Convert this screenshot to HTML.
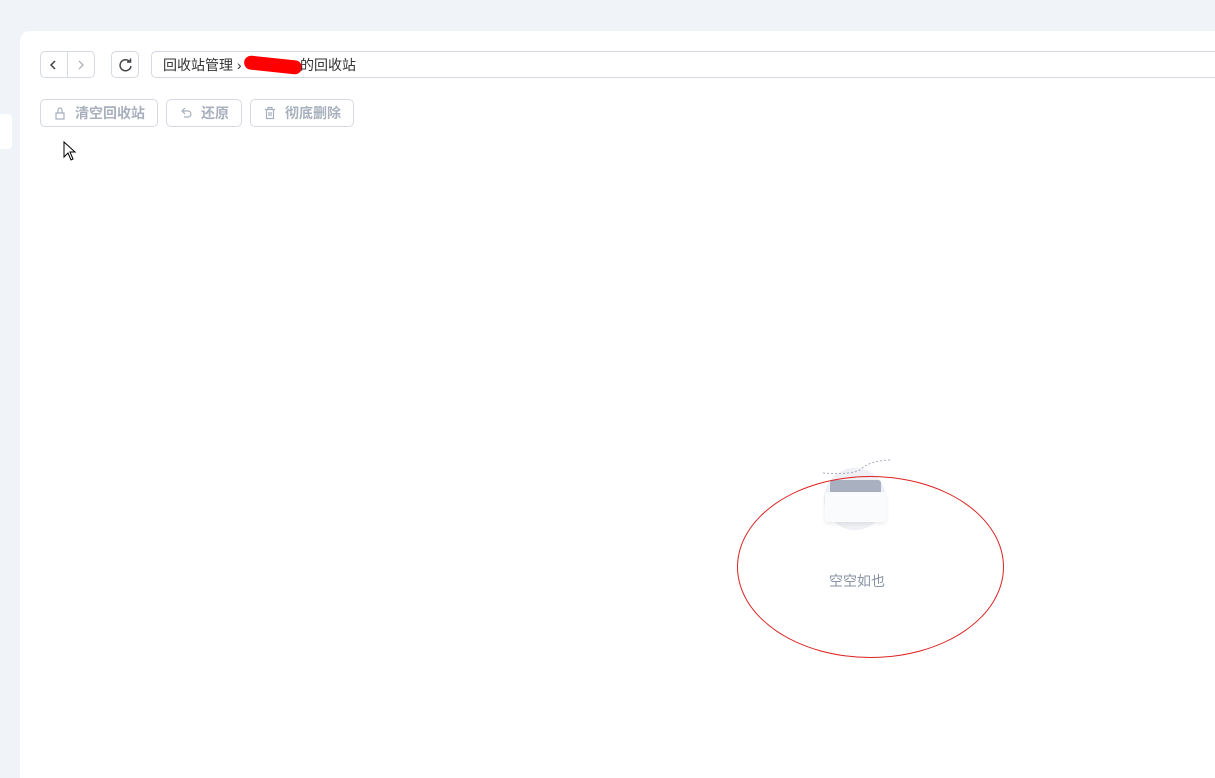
<!DOCTYPE html>
<html><head><meta charset="utf-8"><style>
html,body{margin:0;width:1215px;height:778px;overflow:hidden}
body{background:#f0f3f8;position:relative;font-family:"Liberation Sans","Noto Sans CJK SC",sans-serif}
.card{position:absolute;left:20px;top:31px;width:1195px;height:747px;background:#fff;border-radius:10px 0 0 0}
.tab{position:absolute;left:0;top:114px;width:12px;height:35px;background:#fff;border-radius:0 4px 4px 0}
.b{position:absolute;border:1px solid #d5d9e0;border-radius:5px;box-sizing:border-box;background:#fff}
.t{position:absolute;font-size:14px;color:#333;top:4px;line-height:18px}
.g{color:#a8b0bd;font-size:14px;font-weight:bold;position:absolute;top:4px;line-height:18px}
.i{position:absolute;left:12px;top:6px}
</style></head><body>
<div class="tab"></div>
<div class="card"></div>
<div class="b" style="left:40px;top:51px;width:55px;height:27px"><div style="position:absolute;left:26px;top:0;width:1px;height:25px;background:#d5d9e0"></div>
<svg style="position:absolute;left:8px;top:7px" width="10" height="12"><path d="M6 2 L2 6 L6 10" stroke="#444" stroke-width="1.5" fill="none"/></svg>
<svg style="position:absolute;left:35px;top:7px" width="10" height="12"><path d="M3 2 L7 6 L3 10" stroke="#aaa" stroke-width="1.2" fill="none"/></svg></div>
<div class="b" style="left:111px;top:51px;width:28px;height:27px"><svg style="position:absolute;left:6px;top:6px" width="15" height="15"><path d="M12 4 A5.5 5.5 0 1 0 13 8" stroke="#444" stroke-width="1.5" fill="none"/><path d="M9 4 L12.5 4 L12.5 0.5" stroke="#444" stroke-width="1.5" fill="none"/></svg></div>
<div class="b" style="left:151px;top:51px;width:1080px;height:27px"><span class="t" style="left:11px">回收站管理 ›</span>
<div style="position:absolute;left:92px;top:6px;width:58px;height:14px;background:#f00;border-radius:8px;transform:rotate(6deg)"></div>
<span class="t" style="left:148px">的回收站</span></div>
<div class="b" style="left:40px;top:99px;width:118px;height:28px"><svg class="i" width="14" height="14"><path d="M3 7 H11 V13 H3 Z M5 7 V4 A2 2 0 0 1 9 4 V7" stroke="#a8b0bd" stroke-width="1.2" fill="none"/></svg><span class="g" style="left:34px">清空回收站</span></div>
<div class="b" style="left:166px;top:99px;width:76px;height:28px"><svg class="i" width="14" height="14"><path d="M4 5 H9 A3 3 0 0 1 9 11 H5 M6 2 L3 5 L6 8" stroke="#a8b0bd" stroke-width="1.2" fill="none"/></svg><span class="g" style="left:34px">还原</span></div>
<div class="b" style="left:250px;top:99px;width:104px;height:28px"><svg class="i" width="14" height="14"><path d="M2 3.5 H12 M5 3.5 V1.5 H9 V3.5 M3.5 3.5 V12.5 H10.5 V3.5 M6 6 V10 M8 6 V10" stroke="#a8b0bd" stroke-width="1.2" fill="none"/></svg><span class="g" style="left:34px">彻底删除</span></div>
<svg style="position:absolute;left:62px;top:141px" width="16" height="22"><path d="M2 1 L2 16 L6 12 L9 19 L11 18 L8 11 L13 11 Z" fill="#fff" stroke="#000"/></svg>
<div style="position:absolute;left:824px;top:468px;width:62px;height:62px;border-radius:50%;background:#eef0f5"></div>
<div style="position:absolute;left:830px;top:480px;width:51px;height:18px;background:#a9b0bf;border-radius:3px 3px 0 0"></div>
<div style="position:absolute;left:825px;top:492px;width:61px;height:30px;background:#fafbfc;border-radius:3px;box-shadow:0 2px 4px rgba(0,0,0,.08)"></div>
<svg style="position:absolute;left:820px;top:455px" width="75" height="40"><path d="M3 18 Q30 20 40 15 Q50 5 72 5" stroke="#aab" stroke-dasharray="2 2" fill="none"/></svg>
<div style="position:absolute;left:829px;top:571px;font-size:14px;color:#8a93a3">空空如也</div>
<div style="position:absolute;left:737px;top:476px;width:265px;height:180px;border:1px solid #d22;border-radius:50%"></div>
</body></html>
